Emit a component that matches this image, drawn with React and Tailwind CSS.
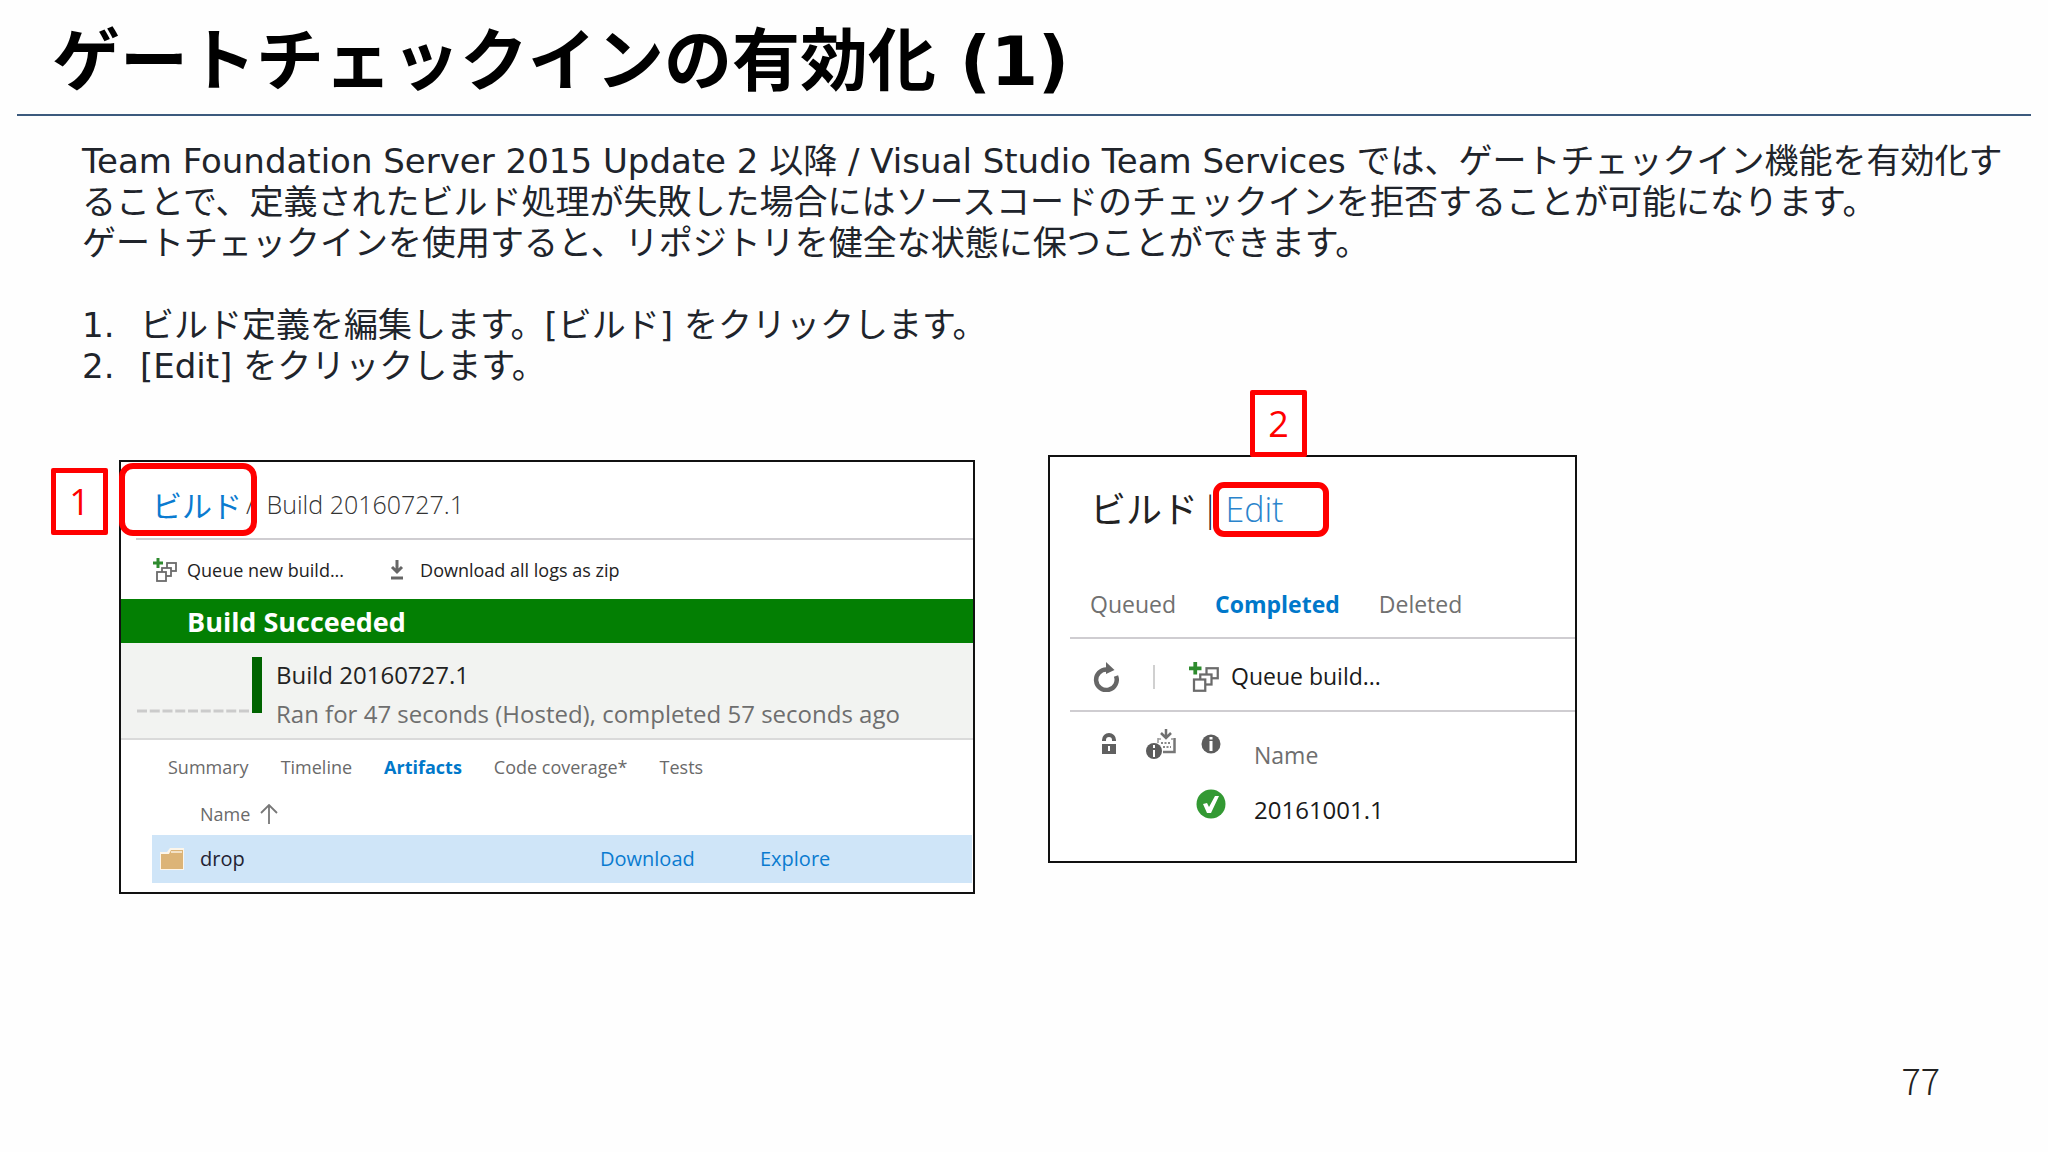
const QueueIcon = ({ className }) => (
  <svg viewBox="0 0 24 24" className={className} fill="none" aria-hidden="true">
    <g stroke="#6b6b6b" strokeWidth="1.8" fill="#fff">
      <rect x="14" y="5" width="9" height="8" />
      <rect x="9" y="10" width="9" height="8" />
      <rect x="4" y="14" width="9" height="9" />
    </g>
    <path d="M5 0v10M0 5h10" stroke="#2e8b2e" strokeWidth="3" />
  </svg>
);

const DownloadIcon = () => (
  <svg viewBox="0 0 14 22" className="h-[22px] w-[14px]" fill="none" aria-hidden="true">
    <path d="M7 1v12M2 8l5 5 5-5" stroke="#666" strokeWidth="3" />
    <path d="M1 19h12" stroke="#666" strokeWidth="3" />
  </svg>
);

const ArrowUp = () => (
  <svg viewBox="0 0 18 20" className="h-5 w-[18px]" fill="none" stroke="#777" strokeWidth="1.8" aria-hidden="true">
    <path d="M9 20V1M1 9l8-8 8 8" />
  </svg>
);

const FolderIcon = () => (
  <svg viewBox="0 0 24 22" className="h-[22px] w-6" aria-hidden="true">
    <path d="M0 4h7l3-4h14v22H0z" fill="#fdf6ea" />
    <path d="M1 6h8l2-4h12v19H1z" fill="#dcb477" />
    <path d="M11 4h11" stroke="#fdf6ea" strokeWidth="1.4" />
  </svg>
);

const RefreshIcon = () => (
  <svg viewBox="0 0 26 30" className="h-[30px] w-[26px]" fill="none" aria-hidden="true">
    <path d="M23 14A10.3 10.3 0 1 1 14 7.5" stroke="#666" strokeWidth="4.5" />
    <path d="M13 0l8.5 8L13 12z" fill="#666" />
  </svg>
);

const LockIcon = () => (
  <svg viewBox="0 0 16 22" className="h-[22px] w-4" fill="none" aria-hidden="true">
    <path d="M3 8V7a5 5 0 0 1 10 0v1" stroke="#606060" strokeWidth="4" />
    <path d="M1 11h14v10H1z" fill="#606060" />
    <path d="M8 13v5" stroke="#fff" strokeWidth="2" />
  </svg>
);

const InfoIcon = () => (
  <svg viewBox="0 0 20 20" className="size-5" aria-hidden="true">
    <circle cx="10" cy="10" r="9.5" fill="#5c5c5c" />
    <path d="M10 3v2.5M10 7v10" stroke="#fff" strokeWidth="3" />
  </svg>
);

const ReasonIcon = () => (
  <svg viewBox="0 0 30 30" className="size-[30px]" fill="none" aria-hidden="true">
    <path d="M20 0v8M15 4l5 5 5-5" stroke="#707070" strokeWidth="2.5" />
    <path d="M28.5 9v14H17" stroke="#777" strokeWidth="2.5" />
    <path d="M12 9v5M12 10h3M25 10h3" stroke="#999" strokeWidth="1.5" />
    <path d="M15 14h10M17 18h8" stroke="#888" strokeWidth="2" strokeDasharray="2 1.5" />
    <circle cx="8" cy="22" r="8" fill="#5c5c5c" />
    <path d="M8 16v3M8 21v7" stroke="#fff" strokeWidth="2" />
  </svg>
);

const CheckIcon = () => (
  <svg viewBox="0 0 30 30" className="size-[30px]" aria-hidden="true">
    <circle cx="15" cy="15" r="14.5" fill="#339933" />
    <path d="M7 15l4-1 2 4 6-11h4l-8 17h-4z" fill="#fff" />
  </svg>
);

const Badge = ({ children, className }) => (
  <div
    className={`flex h-[67px] w-[57px] items-center justify-center rounded-xs border-[5px] border-[#ff0000] bg-white text-4xl text-[#ff0000] ${className}`}
  >
    {children}
  </div>
);

const leftTabs = ["Summary", "Timeline", "Artifacts", "Code coverage*", "Tests"];
const rightTabs = ["Queued", "Completed", "Deleted"];

function BuildPanel() {
  return (
    <section className="mt-[70px] border-2 border-[#111] bg-white">
      <header className="ml-[15px] flex h-[78px] items-center border-b-2 border-[#cfcdd1] pt-2.5 pl-4 text-[25px] font-light text-[#333]">
        <span className="relative">
          <a href="#builds" className="text-[30px] font-normal text-[#0a7bd0]">ビルド</a>
          <span className="absolute -top-5 -left-[33px] h-[73px] w-[138px] rounded-[14px] border-[6px] border-[#ff0000]" />
        </span>
        <span className="ml-1">/</span>
        <h2 className="ml-3">Build 20160727.1</h2>
      </header>
      <div className="flex h-[59px] items-center gap-[46px] pl-8 text-lg text-[#222]">
        <button className="flex items-center gap-2.5">
          <QueueIcon className="size-6" />
          Queue new build...
        </button>
        <button className="flex items-center gap-4">
          <DownloadIcon />
          Download all logs as zip
        </button>
      </div>
      <div className="flex h-11 items-center bg-[#037f03] pt-0.5 pl-[66px] text-[27px] font-bold text-white">Build Succeeded</div>
      <div className="flex h-[97px] border-b-2 border-[#dadada] bg-[#f2f3f1] pt-3.5 pl-4">
        <svg viewBox="0 0 112 56" className="h-14 w-[112px]" aria-hidden="true">
          <path d="M0 54h112" stroke="#cbcbcb" strokeWidth="3" strokeDasharray="10 2.75" />
        </svg>
        <div className="ml-[3px] h-14 w-2.5 bg-[#006400]" />
        <div className="-mt-0.5 ml-[14px] text-2xl leading-[39px]">
          <p className="text-[#222]">Build 20160727.1</p>
          <p className="text-[#6e6e6e]">Ran for 47 seconds (Hosted), completed 57 seconds ago</p>
        </div>
      </div>
      <nav className="flex h-[54px] items-center gap-8 pl-[47px] text-lg text-[#6a6a6a]">
        {leftTabs.map((t) => (
          <button key={t} className={t === "Artifacts" ? "font-bold text-[#0078ca]" : ""}>{t}</button>
        ))}
      </nav>
      <table className="mb-[9px] ml-[31px] w-[calc(100%-32px)] table-fixed text-left">
        <thead>
          <tr className="h-[41px] text-lg text-[#6a6a6a]">
            <th className="w-[48px]" />
            <th className="w-[400px] pb-0.5 font-normal">
              <span className="flex items-center gap-2.5">Name <ArrowUp /></span>
            </th>
            <th className="w-[160px]" />
            <th />
          </tr>
        </thead>
        <tbody>
          <tr className="h-12 bg-[#cfe5f8] text-xl">
            <td className="pl-2"><FolderIcon /></td>
            <td className="text-[#223]">drop</td>
            <td><a href="#download" className="text-[#0a7bd0]">Download</a></td>
            <td><a href="#explore" className="text-[#0a7bd0]">Explore</a></td>
          </tr>
        </tbody>
      </table>
    </section>
  );
}

function DefinitionPanel() {
  return (
    <section className="border-2 border-[#111] bg-white">
      <header className="flex h-[105px] items-center pl-10 text-[34px] font-light text-[#222]">
        <h2 className="text-4xl font-normal">ビルド</h2>
        <span className="ml-[3px]">|</span>
        <span className="relative ml-1.5">
          <a href="#edit" className="text-[#2a84cc]">Edit</a>
          <span className="absolute -top-0.5 -left-3 h-[55px] w-[116px] rounded-[11px] border-[6px] border-[#ff0000]" />
        </span>
      </header>
      <nav className="ml-5 flex h-[77px] items-center gap-[39px] border-b-2 border-[#cfcdd1] pt-2.5 pl-5 text-[23px] text-[#707070]">
        {rightTabs.map((t) => (
          <button key={t} className={t === "Completed" ? "font-bold text-[#0078ca]" : ""}>{t}</button>
        ))}
      </nav>
      <div className="ml-5 flex h-[73px] items-center border-b-2 border-[#cfcdd1] pt-1 pl-[23px]">
        <button aria-label="Refresh"><RefreshIcon /></button>
        <span className="ml-[34px] h-6 w-0.5 bg-[#d0d0d0]" />
        <button className="ml-[34px] flex items-center gap-3 text-[23px] text-[#1a1a1a]">
          <QueueIcon className="size-[30px]" />
          Queue build...
        </button>
      </div>
      <table className="mb-[23px] ml-[51px] text-left">
        <thead>
          <tr className="h-[70px] text-[23px] text-[#6e6e6e]">
            <th className="w-[45px] pb-1.5"><LockIcon /></th>
            <th className="w-[50px] pb-1.5"><ReasonIcon /></th>
            <th className="w-[58px] pb-1.5 pl-[5px]"><InfoIcon /></th>
            <th className="pt-4 font-normal">Name</th>
          </tr>
        </thead>
        <tbody>
          <tr className="h-14 text-2xl text-[#1a1a1a]">
            <td />
            <td />
            <td className="pb-3"><CheckIcon /></td>
            <td>20161001.1</td>
          </tr>
        </tbody>
      </table>
    </section>
  );
}

export default function App() {
  return (
    <main className="flex min-h-screen flex-col bg-[#fefefe] font-['DejaVu_Sans','Noto_Sans_CJK_JP',sans-serif]">
      <h1 className="mx-[17px] flex h-[116px] items-center border-b-2 border-[#3c5a7d] pt-2.5 pl-[35px] text-[68px] font-bold text-black">
        ゲートチェックインの有効化 (1)
      </h1>
      <div className="mt-[25px] pr-9 pl-[82px] text-[34px] leading-[41px] text-[#20242b]">
        <p>
          Team Foundation Server 2015 Update 2 以降 / Visual Studio Team Services では、ゲートチェックイン機能を有効化することで、定義されたビルド処理が失敗した場合にはソースコードのチェックインを拒否することが可能になります。
        </p>
        <p>ゲートチェックインを使用すると、リポジトリを健全な状態に保つことができます。</p>
        <ol className="mt-[41px]">
          <li className="flex"><span className="w-[58px]">1.</span>ビルド定義を編集します。[ビルド] をクリックします。</li>
          <li className="flex"><span className="w-[58px]">2.</span>[Edit] をクリックします。</li>
        </ol>
      </div>
      <div className="mt-[3px] grid grid-cols-[57px_11px_856fr_73fr_529fr_471fr] items-start pl-[51px] font-['Open_Sans','Noto_Sans_CJK_JP',sans-serif]">
        <Badge className="mt-[78px]">1</Badge>
        <div />
        <BuildPanel />
        <div />
        <div>
          <Badge className="relative z-10 -mb-0.5 ml-[202px]">2</Badge>
          <DefinitionPanel />
        </div>
      </div>
      <footer className="mt-auto mb-[53px] pr-[108px] text-right font-['Noto_Sans_CJK_JP',sans-serif] text-4xl font-light text-[#222]">77</footer>
    </main>
  );
}
